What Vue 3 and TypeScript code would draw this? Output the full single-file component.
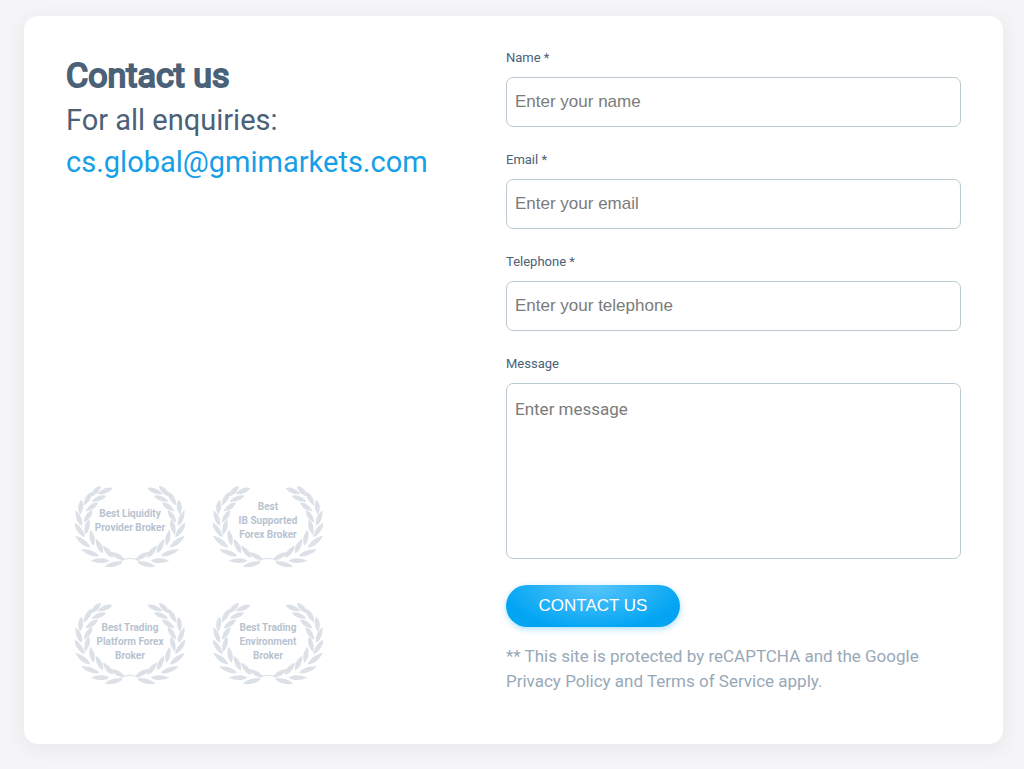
<script setup lang="ts">
import { ref } from 'vue'

interface Leaf { x: number; y: number; angle: number; length: number }
interface Field { id: string; label: string; type: string; placeholder: string }

const fields: Field[] = [
  { id: 'name', label: 'Name *', type: 'text', placeholder: 'Enter your name' },
  { id: 'email', label: 'Email *', type: 'email', placeholder: 'Enter your email' },
  { id: 'telephone', label: 'Telephone *', type: 'tel', placeholder: 'Enter your telephone' },
]
const values = ref<Record<string, string>>({ name: '', email: '', telephone: '' })
const message = ref('')

const awards: string[][] = [
  ['Best Liquidity', 'Provider Broker'],
  ['Best', 'IB Supported', 'Forex Broker'],
  ['Best Trading', 'Platform Forex', 'Broker'],
  ['Best Trading', 'Environment', 'Broker'],
]

// Leaves of the left branch; the right branch mirrors them.
const leaves: Leaf[] = [
  { x: 90, y: 15, angle: -22, length: 48 },
  { x: 62, y: 16, angle: -46, length: 46 },
  { x: 71, y: 38, angle: -22, length: 48 },
  { x: 38, y: 38, angle: -60, length: 48 },
  { x: 50, y: 63, angle: -35, length: 46 },
  { x: 17, y: 64, angle: -84, length: 46 },
  { x: 39, y: 91, angle: -56, length: 46 },
  { x: 11, y: 96, angle: 68, length: 50 },
  { x: 36, y: 124, angle: -76, length: 48 },
  { x: 13, y: 131, angle: 55, length: 56 },
  { x: 51, y: 155, angle: 78, length: 48 },
  { x: 23, y: 167, angle: 38, length: 58 },
  { x: 73, y: 180, angle: 64, length: 48 },
  { x: 45, y: 200, angle: 20, length: 58 },
  { x: 99, y: 197, angle: 50, length: 48 },
  { x: 75, y: 224, angle: 0, length: 56 },
  { x: 127, y: 210, angle: 28, length: 50 },
  { x: 116, y: 235, angle: -14, length: 56 },
]

function leafPath(length: number): string {
  const h = length / 2
  return `M${-h} 0 Q${-h / 3} -9 ${h / 3} -7 Q${h * 0.8} -5 ${h} 0 Q${h * 0.8} 5 ${h / 3} 7 Q${-h / 3} 9 ${-h} 0Z`
}
</script>

<template>
  <main class="page">
    <section class="card">
      <div class="intro">
        <header>
          <h1>Contact us</h1>
          <p class="lead">For all enquiries:</p>
          <a class="mail" href="mailto:cs.global@gmimarkets.com">cs.global@gmimarkets.com</a>
        </header>
        <ul class="awards">
          <li v-for="(lines, i) in awards" :key="i" class="award">
            <svg class="laurel" viewBox="0 0 330 246" aria-hidden="true">
              <g v-for="side in [1, -1]" :key="side" :transform="side === 1 ? '' : 'translate(330 0) scale(-1 1)'">
                <path
                  v-for="(leaf, n) in leaves"
                  :key="n"
                  :d="leafPath(leaf.length)"
                  :transform="`translate(${leaf.x} ${leaf.y}) rotate(${leaf.angle})`"
                />
                <path class="stem" d="M132 228 Q148 216 165 217" />
              </g>
            </svg>
            <p class="award-text"><span v-for="line in lines" :key="line">{{ line }}</span></p>
          </li>
        </ul>
      </div>

      <form class="form" @submit.prevent>
        <div v-for="field in fields" :key="field.id" class="field">
          <label :for="field.id">{{ field.label }}</label>
          <input :id="field.id" v-model="values[field.id]" :type="field.type" :placeholder="field.placeholder" />
        </div>
        <div class="field message">
          <label for="message">Message</label>
          <textarea id="message" v-model="message" placeholder="Enter message"></textarea>
        </div>
        <button type="submit">CONTACT US</button>
        <p class="note">** This site is protected by reCAPTCHA and the Google Privacy Policy and Terms of Service apply.</p>
      </form>
    </section>
  </main>
</template>

<style>
body {
  background: #f5f5f8;
}
</style>

<style scoped>
.page {
  padding: 16px 21px 25px 24px;
  font-family: Roboto, sans-serif;
  color: #4a6178;
}
.card {
  display: grid;
  grid-template-columns: 398px 1fr;
  column-gap: 42px;
  padding: 32px 42px 50px;
  border-radius: 14px;
  background: #fff;
  box-shadow: 0 4px 20px rgba(60, 60, 70, 0.08);
}
.intro {
  display: flex;
  flex-direction: column;
  justify-content: space-between;
}
h1,
p,
ul {
  margin: 0;
  padding: 0;
}
h1 {
  padding-top: 4px;
  font-size: 34px;
  line-height: 47px;
  font-weight: 400;
  -webkit-text-stroke: 2px currentColor;
}
.lead,
.mail {
  display: block;
  font-size: 29px;
  line-height: 42px;
}
.mail {
  color: #169fe6;
  text-decoration: none;
}
.awards {
  display: grid;
  grid-template-columns: 110px 110px;
  gap: 35px 28px;
  padding: 0 0 9px 9px;
  list-style: none;
}
.award {
  display: grid;
  place-items: center;
}
.laurel,
.award-text {
  grid-area: 1 / 1;
}
.laurel {
  display: block;
  width: 110px;
  fill: #dce1e7;
}
.stem {
  fill: none;
  stroke: #dce1e7;
  stroke-width: 3;
}
.award-text {
  padding-bottom: 4px;
  text-align: center;
  font-size: 10px;
  line-height: 14px;
  font-weight: 700;
  color: #b8c3d0;
}
.award:nth-child(-n + 2) .award-text {
  padding-bottom: 12px;
}
.award-text span {
  display: block;
}
.form {
  display: flex;
  flex-direction: column;
  align-items: flex-start;
}
.field {
  width: 100%;
  margin-bottom: 23px;
}
.message {
  margin-bottom: 26px;
}
label {
  display: block;
  margin-bottom: 9px;
  font-size: 13px;
  line-height: 20px;
}
input,
textarea {
  display: block;
  box-sizing: border-box;
  width: 100%;
  height: 50px;
  padding: 0 8px;
  border: 1px solid #bdc9d0;
  border-radius: 7px;
  background: #fff;
  color: #475f75;
  font-family: "Liberation Sans", Arial, sans-serif;
  font-size: 17px;
}
textarea {
  height: 176px;
  padding: 15px 8px;
  font-family: Roboto, sans-serif;
  line-height: 20px;
  resize: none;
}
input::placeholder,
textarea::placeholder {
  color: #7b7b7b;
  opacity: 1;
}
button {
  height: 42px;
  width: 174px;
  padding: 0;
  border: 0;
  border-radius: 21px;
  background: radial-gradient(ellipse at 50% 0, #5ac6fb 0, #03a5f3 75%);
  box-shadow: 0 2px 6px rgba(3, 165, 243, 0.35);
  color: #fff;
  font-family: "Liberation Sans", Arial, sans-serif;
  font-size: 17px;
}
.note {
  padding-top: 17px;
  font-size: 17px;
  line-height: 25px;
  color: #98a8b8;
}
</style>
